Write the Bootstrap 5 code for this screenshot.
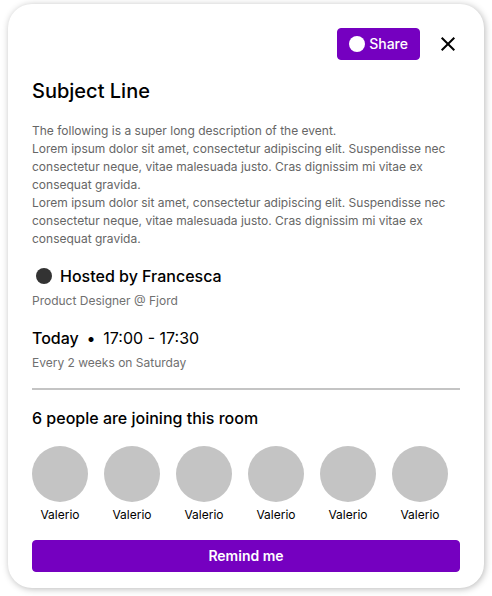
<!DOCTYPE html>
<html lang="en">
<head>
<meta charset="utf-8">
<meta name="viewport" content="width=device-width, initial-scale=1">
<title>Subject Line</title>
<link href="https://cdn.jsdelivr.net/npm/bootstrap@5.3.0/dist/css/bootstrap.min.css" rel="stylesheet">
<style>
  body { font-family: Inter, "Liberation Sans", sans-serif; color: #000; background: #fff; padding: 4px 8px 8px; }
  .event-card { --bs-card-border-width: 0; --bs-card-border-radius: 24px; --bs-card-bg: #fff; color: #000; box-shadow: 1px 1px 7px rgba(0, 0, 0, .28); }
  .event-title { font-size: 20px; line-height: 30px; font-weight: 500; }
  .event-heading { font-size: 16px; line-height: 24px; font-weight: 500; }
  .event-text { font-size: 12px; line-height: 18px; }
  .event-muted { color: #666; }
  .event-note { color: #707070; }
  .btn-event { --bs-btn-color: #fff; --bs-btn-bg: #7500c0; --bs-btn-border-color: #7500c0; --bs-btn-hover-color: #fff; --bs-btn-hover-bg: #6000a0; --bs-btn-active-color: #fff; --bs-btn-active-bg: #500088; --bs-btn-border-radius: 4px; --bs-btn-font-size: 14px; --bs-btn-line-height: 20px; --bs-btn-padding-y: 5px; --bs-btn-padding-x: 11px; --bs-btn-font-weight: 500; }
  .btn-remind { --bs-btn-font-weight: 600; }
  .btn-dismiss { --bs-btn-color: #000; width: 24px; height: 24px; }
  .dot { width: 16px; height: 16px; }
  .dot-host { background: #333; }
  .avatar { width: 56px; height: 56px; background: #c4c4c4; }
  .event-rule { border-top: 2px solid #c4c4c4; }
</style>
<script defer src="https://cdn.jsdelivr.net/npm/bootstrap@5.3.0/dist/js/bootstrap.bundle.min.js"></script>
</head>
<body>
<main class="card event-card">
  <div class="card-body p-4 pb-3 d-flex flex-column gap-3">
    <header class="d-flex justify-content-end align-items-center gap-3">
      <button type="button" class="btn btn-event d-flex align-items-center gap-1"><span class="dot bg-white rounded-circle"></span>Share</button>
      <button type="button" class="btn btn-dismiss p-0 border-0 d-flex" aria-label="Close">
        <svg width="24" height="24" viewBox="0 0 24 24" fill="none" stroke="currentColor" stroke-width="2" aria-hidden="true"><path d="M5.7 5.7 18.3 18.3M18.3 5.7 5.7 18.3"/></svg>
      </button>
    </header>
    <h1 class="event-title mb-0">Subject Line</h1>
    <div class="event-text event-muted">
      <p class="mb-0">The following is a super long description of the event.</p>
      <p class="mb-0">Lorem ipsum dolor sit amet, consectetur adipiscing elit. Suspendisse nec consectetur neque, vitae malesuada justo. Cras dignissim mi vitae ex consequat gravida.</p>
      <p class="mb-0">Lorem ipsum dolor sit amet, consectetur adipiscing elit. Suspendisse nec consectetur neque, vitae malesuada justo. Cras dignissim mi vitae ex consequat gravida.</p>
    </div>
    <section>
      <h2 class="event-heading mb-1 ps-1 d-flex align-items-center gap-2"><span class="dot dot-host rounded-circle"></span>Hosted by Francesca</h2>
      <p class="event-text event-note mb-0">Product Designer @ Fjord</p>
    </section>
    <section>
      <h2 class="event-heading mb-1 d-flex gap-2"><span>Today</span><span>•</span><time class="fw-normal">17:00 - 17:30</time></h2>
      <p class="event-text event-note mb-0">Every 2 weeks on Saturday</p>
    </section>
    <hr class="event-rule m-0 opacity-100">
    <h2 class="event-heading mb-0">6 people are joining this room</h2>
    <ul class="list-unstyled d-flex flex-wrap gap-3 mb-0 event-text text-center">
      <li><div class="avatar rounded-circle mb-1"></div>Valerio</li>
      <li><div class="avatar rounded-circle mb-1"></div>Valerio</li>
      <li><div class="avatar rounded-circle mb-1"></div>Valerio</li>
      <li><div class="avatar rounded-circle mb-1"></div>Valerio</li>
      <li><div class="avatar rounded-circle mb-1"></div>Valerio</li>
      <li><div class="avatar rounded-circle mb-1"></div>Valerio</li>
    </ul>
    <button type="button" class="btn btn-event btn-remind w-100">Remind me</button>
  </div>
</main>
</body>
</html>
